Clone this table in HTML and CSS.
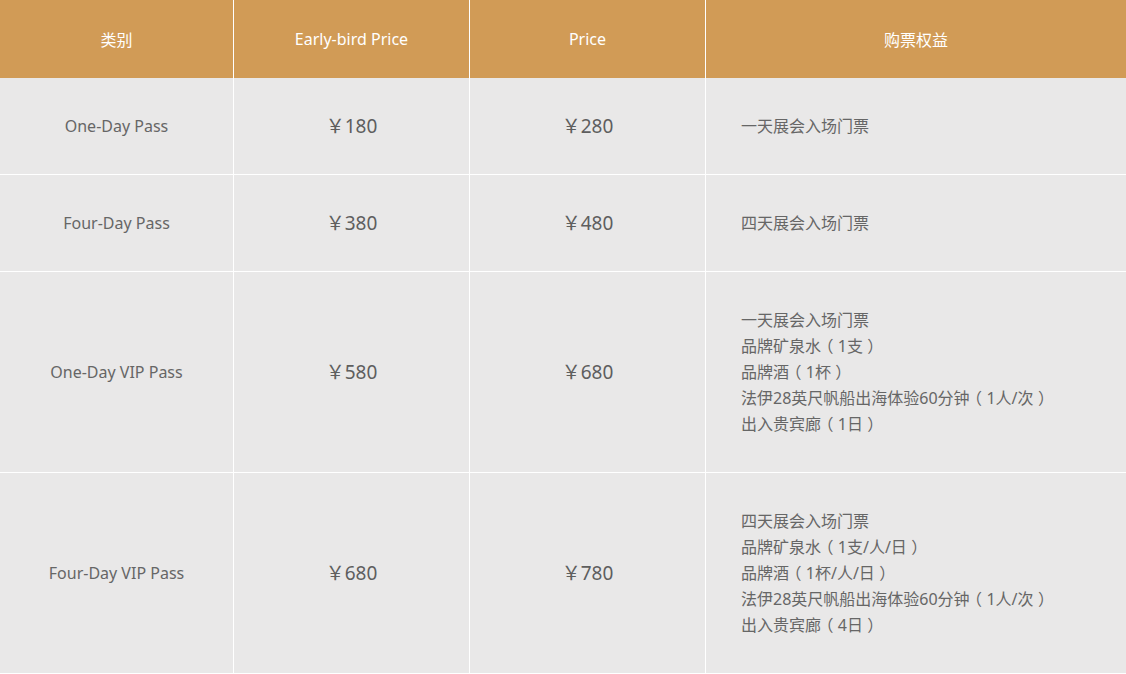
FILE: index.html
```html
<!DOCTYPE html>
<html lang="zh-CN">
<head>
<meta charset="utf-8">
<title>Tickets</title>
<link rel="stylesheet" href="styles.css">
</head>
<body>
<table class="tickets">
  <colgroup>
    <col class="c-type">
    <col class="c-early">
    <col class="c-price">
    <col class="c-benefit">
  </colgroup>
  <thead>
    <tr>
      <th>类别</th>
      <th>Early-bird Price</th>
      <th>Price</th>
      <th>购票权益</th>
    </tr>
  </thead>
  <tbody>
    <tr>
      <td class="type">One-Day Pass</td>
      <td class="money">￥180</td>
      <td class="money">￥280</td>
      <td class="benefit">一天展会入场门票</td>
    </tr>
    <tr>
      <td class="type">Four-Day Pass</td>
      <td class="money">￥380</td>
      <td class="money">￥480</td>
      <td class="benefit">四天展会入场门票</td>
    </tr>
    <tr>
      <td class="type">One-Day VIP Pass</td>
      <td class="money">￥580</td>
      <td class="money">￥680</td>
      <td class="benefit">一天展会入场门票<br>品牌矿泉水<span class="p">（</span>1支<span class="p">）</span><br>品牌酒<span class="p">（</span>1杯<span class="p">）</span><br>法伊28英尺帆船出海体验60分钟<span class="p">（</span>1人/次<span class="p">）</span><br>出入贵宾廊<span class="p">（</span>1日<span class="p">）</span></td>
    </tr>
    <tr>
      <td class="type">Four-Day VIP Pass</td>
      <td class="money">￥680</td>
      <td class="money">￥780</td>
      <td class="benefit">四天展会入场门票<br>品牌矿泉水<span class="p">（</span>1支/人/日<span class="p">）</span><br>品牌酒<span class="p">（</span>1杯/人/日<span class="p">）</span><br>法伊28英尺帆船出海体验60分钟<span class="p">（</span>1人/次<span class="p">）</span><br>出入贵宾廊<span class="p">（</span>4日<span class="p">）</span></td>
    </tr>
  </tbody>
</table>
</body>
</html>
```

FILE: styles.css
```css
html, body {
  margin: 0;
  padding: 0;
  background: #e9e8e8;
}

body {
  font-family: "Noto Sans", "Noto Sans CJK SC", sans-serif;
  color: #666;
}

.tickets {
  width: 1126px;
  table-layout: fixed;
  border-collapse: separate;
  border-spacing: 0;
}

.c-type { width: 234px; }
.c-early { width: 236px; }
.c-price { width: 236px; }
.c-benefit { width: 420px; }

.tickets th,
.tickets td {
  box-sizing: border-box;
  padding: 0;
  vertical-align: middle;
  border-right: 1px solid #fff;
}

.tickets th:last-child,
.tickets td:last-child {
  border-right: none;
}

.tickets th {
  height: 78px;
  background: #d19b56;
  color: #fff;
  font-weight: normal;
  font-size: 16px;
  text-align: center;
}

.tickets td {
  background: #e9e8e8;
  border-bottom: 1px solid #fff;
  padding: 35px 0;
  line-height: 26px;
  font-size: 16px;
}

.tickets .type {
  text-align: center;
  color: #666;
}

.tickets .money {
  text-align: center;
  font-size: 19px;
  color: #5e5e5e;
}

.tickets .benefit {
  text-align: left;
  padding-left: 35px;
  font-size: 16px;
  color: #666;
}

.benefit .p {
  display: inline-block;
  width: 1.05em;
  text-align: center;
  font-feature-settings: "halt";
}
```
